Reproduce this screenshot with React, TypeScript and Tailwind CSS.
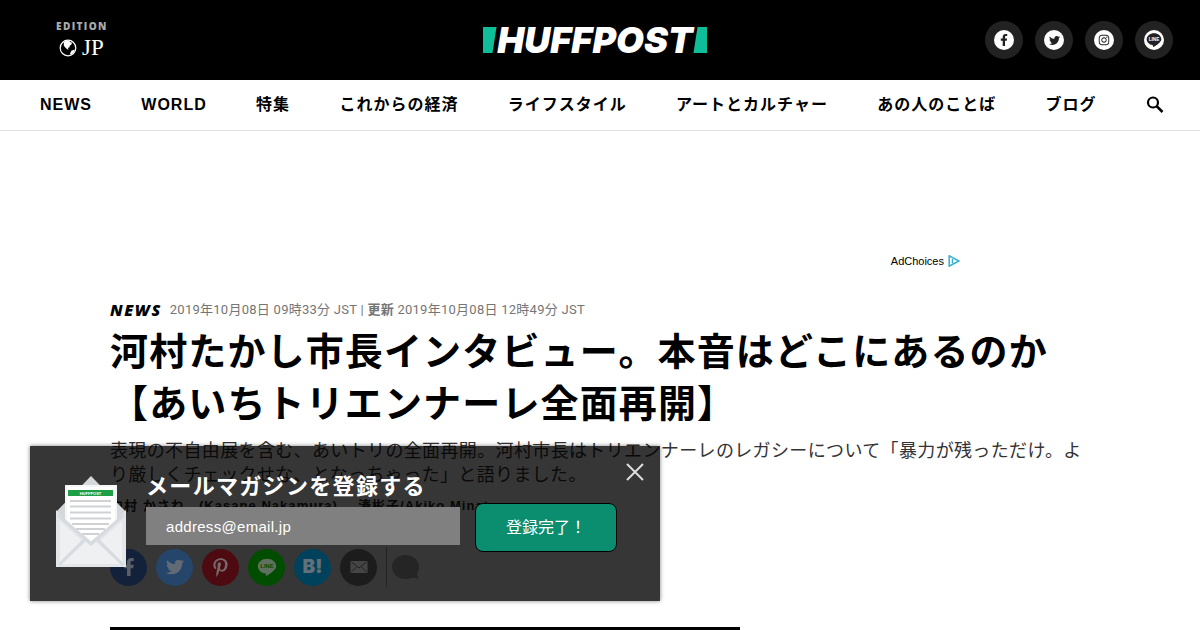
import type { ReactNode } from "react";
import { FaFacebookF, FaTwitter, FaPinterestP, FaInstagram } from "react-icons/fa";

const sections = [
  "NEWS",
  "WORLD",
  "特集",
  "これからの経済",
  "ライフスタイル",
  "アートとカルチャー",
  "あの人のことば",
  "ブログ",
];

function LineIcon({ className, textColor }: { className: string; textColor: string }) {
  return (
    <svg viewBox="0 0 24 24" className={className} aria-hidden="true">
      <path
        fill="currentColor"
        d="M12 2C6 2 1 6 1 11c0 4.400 3.800 8.100 9 8.800.9.200.8.900.6 2.200-.1.600.2.800.8.500 3-1.500 6.800-4.400 9-6.700C22.200 14 23 12.600 23 11c0-5-5-9-11-9z"
      />
      <text
        x="12"
        y="13.500"
        textAnchor="middle"
        fontSize="7"
        fontWeight="700"
        fontFamily="Liberation Sans, sans-serif"
        fill={textColor}
      >
        LINE
      </text>
    </svg>
  );
}

function GlobeIcon() {
  return (
    <svg viewBox="0 0 18 18" className="size-[18px]" aria-hidden="true">
      <circle cx="9" cy="9" r="7.800" fill="none" stroke="#fff" strokeWidth="1.200" />
      <path
        fill="#fff"
        d="M4.800 3.200 7 1.800l3.200-.4 1.200 1.800 1.600.2-.4 1.800-1.800 1.600-.4 1.800-1.600.2.800 1.600-1 .2-2.400-2.200L4.800 6.600zM12.400 11.800l2-.8 1.600-.6-1.200 3-2.800 2.200-1-.8z"
      />
    </svg>
  );
}

function Masthead() {
  return (
    <header className="flex h-20 items-center justify-between bg-black pl-14 pr-[27px] text-white">
      <a href="#edition" className="flex w-[149px] flex-col">
        <span className="font-['Open_Sans',sans-serif] text-[10px] leading-3 font-extrabold tracking-[0.14em] text-[#aaaaaa]">
          EDITION
        </span>
        <span className="mt-1 flex items-center gap-[5px] pl-[3px] font-['Liberation_Serif',serif] text-[23px] leading-6">
          <GlobeIcon />
          JP
        </span>
      </a>
      <a href="#home" aria-label="HUFFPOST" className="flex items-center">
        <svg viewBox="0 0 14 26" className="h-[26px] w-[14px]" aria-hidden="true">
          <path fill="#0dbe98" d="M0 0h13.500L9.500 26H0z" />
        </svg>
        <span className="font-[Inter,sans-serif] text-[36px] leading-[26px] font-black italic">HUFFPOST</span>
        <svg viewBox="0 0 14 26" className="h-[26px] w-[14px]" aria-hidden="true">
          <path fill="#0dbe98" d="M4.500 0H14v26H.5z" />
        </svg>
      </a>
      <div className="flex gap-3">
        <HeaderSocial label="Facebook">
          <FaFacebookF className="size-3" />
        </HeaderSocial>
        <HeaderSocial label="Twitter">
          <FaTwitter className="size-[11px]" />
        </HeaderSocial>
        <HeaderSocial label="Instagram">
          <FaInstagram className="size-3" />
        </HeaderSocial>
        <HeaderSocial label="LINE">
          <LineIcon className="size-4" textColor="#fff" />
        </HeaderSocial>
      </div>
    </header>
  );
}

function HeaderSocial({ label, children }: { label: string; children: ReactNode }) {
  return (
    <a
      href={`#${label.toLowerCase()}`}
      aria-label={label}
      className="flex size-[38px] items-center justify-center rounded-full bg-[#222222]"
    >
      <span className="flex size-5 items-center justify-center rounded-full bg-white text-[#222222]">
        {children}
      </span>
    </a>
  );
}

function SectionNav() {
  return (
    <nav className="flex h-[51px] items-center justify-between border-b border-[#e0e0e0] pr-9 pl-10">
      {sections.map((name) => (
        <a
          key={name}
          href={`#${name}`}
          className="text-[16px] leading-6 font-bold tracking-[1px] whitespace-nowrap text-black"
        >
          {name}
        </a>
      ))}
      <button aria-label="検索">
        <svg viewBox="0 0 18 18" className="size-[18px]" fill="none" stroke="#000" aria-hidden="true">
          <circle cx="7" cy="6.500" r="5" strokeWidth="2.200" />
          <path d="m10.500 10 6 6" strokeWidth="2.500" />
        </svg>
      </button>
    </nav>
  );
}

function ShareButton({ label, color, children }: { label: string; color: string; children: ReactNode }) {
  return (
    <button aria-label={label} className={`flex size-[37px] items-center justify-center rounded-full ${color}`}>
      {children}
    </button>
  );
}

// Sits above the popup's dark panel, so the colours here are the dimmed ones.
function ShareBar() {
  return (
    <div className="relative z-20 mt-[29px] flex items-center gap-[9px]">
      <ShareButton label="Facebook" color="bg-[#14213b] text-[#5b5f68]">
        <FaFacebookF className="size-[18px]" />
      </ShareButton>
      <ShareButton label="Twitter" color="bg-[#25456b] text-[#626b75]">
        <FaTwitter className="size-[18px]" />
      </ShareButton>
      <ShareButton label="Pinterest" color="bg-[#4d0a10] text-[#77686a]">
        <FaPinterestP className="size-[19px]" />
      </ShareButton>
      <ShareButton label="LINE" color="bg-[#004d00] text-[#5f705f]">
        <LineIcon className="size-5" textColor="#004d00" />
      </ShareButton>
      <ShareButton label="はてなブックマーク" color="bg-[#00425b] text-[#60717a]">
        <span className="font-[Inter,sans-serif] text-[19px] leading-5 font-black">B!</span>
      </ShareButton>
      <ShareButton label="メール" color="bg-[#1c1c1c] text-[#454545]">
        <svg viewBox="0 0 20 14" className="h-3 w-[18px]" aria-hidden="true">
          <path fill="currentColor" d="M0 0h20v14H0z" />
          <path fill="none" stroke="#1c1c1c" d="m1 1 9 7 9-7M1 13l6.500-6.500M19 13l-6.500-6.500" />
        </svg>
      </ShareButton>
      <span className="h-10 w-px bg-[#222222]" />
      <a href="#comments" aria-label="コメント" className="-ml-1">
        <svg viewBox="0 0 28 24" className="h-6 w-7" aria-hidden="true">
          <ellipse cx="13.500" cy="12" rx="13.500" ry="12" fill="#252525" />
          <path fill="#252525" d="M24 15l2.500 8.500-9-1.500z" />
        </svg>
      </a>
    </div>
  );
}

function Article() {
  return (
    <main className="flex flex-col px-[110px] pt-[122px]">
      <a
        href="#adchoices"
        className="mr-[130px] flex items-center gap-1 self-end font-['Liberation_Sans',sans-serif] text-[11px] leading-4 text-black"
      >
        AdChoices
        <svg viewBox="0 0 12 12" className="size-3" fill="none" stroke="#2fb1cf" aria-hidden="true">
          <path d="M1.200.8v10.400L11 6z" strokeWidth="1.500" />
          <path d="M4.500 4v4.500" strokeWidth="1.500" />
        </svg>
      </a>
      <div className="mt-[31px] flex items-center gap-2 leading-5">
        <a
          href="#news"
          className="font-['Open_Sans',sans-serif] text-[16px] font-extrabold tracking-[0.1em] text-black italic"
        >
          NEWS
        </a>
        <p className="font-[Roboto,'Noto_Sans_CJK_JP',sans-serif] text-[13px] tracking-[0.02em] text-[#757575]">
          2019年10月08日 09時33分 JST | <b>更新</b> 2019年10月08日 12時49分 JST
        </p>
      </div>
      <h1 className="mt-[6px] text-[38px] leading-[52px] font-bold tracking-[0.03em] text-black">
        河村たかし市長インタビュー。本音はどこにあるのか
        <br />
        【あいちトリエンナーレ全面再開】
      </h1>
      <p className="mt-[9px] text-[18px] leading-6 tracking-[0.02em] text-[#333333]">
        表現の不自由展を含む、あいトリの全面再開。河村市長はトリエンナーレのレガシーについて「暴力が残っただけ。より厳しくチェックせな、となっちゃった」と語りました。
      </p>
      <p className="mt-[7px] flex gap-5 text-[13px] leading-6 font-bold tracking-[0.08em] text-[#222222]">
        <span>中村 かさね　(Kasane Nakamura)</span>
        <span>湊彬子/Akiko Minato</span>
      </p>
      <ShareBar />
      <div className="mt-10 h-[3px] w-[630px] bg-black" />
    </main>
  );
}

function NewsletterArt() {
  return (
    <svg viewBox="0 0 70 91" className="relative z-30 h-[91px] w-[70px] shrink-0" aria-hidden="true">
      <path fill="#d5d8db" d="M0 36 35 0l35 36v55H0z" />
      <path fill="#f5f6f7" d="M9 9h52v58H9z" />
      <path fill="#fff" d="M11 11h48v54H11z" />
      <path fill="#1d9f45" d="M12 14h45v6H12z" />
      <text x="34.500" y="18.700" textAnchor="middle" fontSize="4" fontWeight="700" fontFamily="Liberation Sans" fill="#fff">
        HUFFPOST
      </text>
      <path
        stroke="#cfd1d3"
        strokeWidth="1.800"
        d="M14 25h41M14 30.500h41M14 36.500h41M14 42.500h41M16 48h37M20 53h29M26 58h17"
      />
      <path fill="#e4e7ea" d="M0 34l10 11 25 20 25-20 10-11v57H0z" />
      <path fill="#eef0f2" d="M4 45l22 20L4 87zM66 45 44 65l22 22zM5 88l25-22 5 4 5-4 25 22z" />
      <path fill="none" stroke="#d7dade" strokeWidth="3" d="m2 39 33 29 33-29M3 89l25-25M67 89 42 64" />
    </svg>
  );
}

function NewsletterPopup() {
  return (
    <aside className="absolute top-[446px] left-[30px] flex h-[155px] w-[630px] bg-black/79 pl-[26px] shadow-[0_0_4px_rgba(0,0,0,0.5)]">
      <div className="pt-[30px]">
        <NewsletterArt />
      </div>
      <form className="ml-5 pt-[25px]" onSubmit={(e) => e.preventDefault()}>
        <h2 className="relative z-30 text-[22px] leading-8 font-bold tracking-[0.06em] text-white">
          メールマガジンを登録する
        </h2>
        <div className="relative z-30 flex items-start gap-[15px]">
          <input
            type="email"
            aria-label="メールアドレス"
            placeholder="address@email.jp"
            className="mt-1 h-[38px] w-[314px] bg-[#808080] px-5 text-[15px] tracking-[0.02em] text-white placeholder:text-white"
          />
          <button className="h-[49px] w-[142px] rounded-lg border border-black bg-[#0b8e70] text-[16px] text-white">
            登録完了！
          </button>
        </div>
      </form>
      <button aria-label="閉じる" className="absolute top-[17px] right-4 z-30">
        <svg viewBox="0 0 18 18" className="size-[18px]" stroke="#dddddd" strokeWidth="2" aria-hidden="true">
          <path d="m1 1 16 16M17 1 1 17" />
        </svg>
      </button>
    </aside>
  );
}

export default function App() {
  return (
    <div className="relative bg-white font-['Liberation_Sans','Noto_Sans_CJK_JP',sans-serif]">
      <Masthead />
      <SectionNav />
      <Article />
      <NewsletterPopup />
    </div>
  );
}
